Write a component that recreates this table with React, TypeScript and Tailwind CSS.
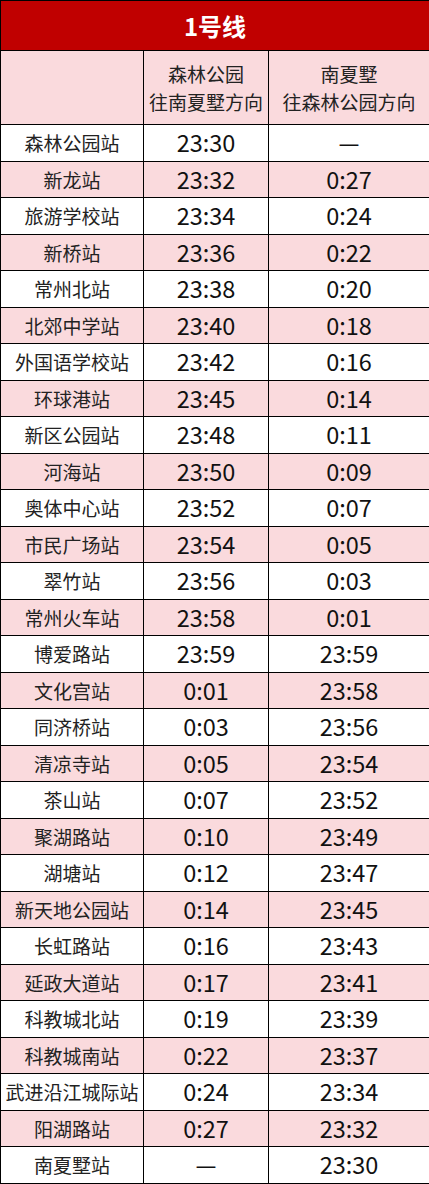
import React from 'react'

const rows: [string, string, string][] = [
  ['森林公园站', '23:30', '—'],
  ['新龙站', '23:32', '0:27'],
  ['旅游学校站', '23:34', '0:24'],
  ['新桥站', '23:36', '0:22'],
  ['常州北站', '23:38', '0:20'],
  ['北郊中学站', '23:40', '0:18'],
  ['外国语学校站', '23:42', '0:16'],
  ['环球港站', '23:45', '0:14'],
  ['新区公园站', '23:48', '0:11'],
  ['河海站', '23:50', '0:09'],
  ['奥体中心站', '23:52', '0:07'],
  ['市民广场站', '23:54', '0:05'],
  ['翠竹站', '23:56', '0:03'],
  ['常州火车站', '23:58', '0:01'],
  ['博爱路站', '23:59', '23:59'],
  ['文化宫站', '0:01', '23:58'],
  ['同济桥站', '0:03', '23:56'],
  ['清凉寺站', '0:05', '23:54'],
  ['茶山站', '0:07', '23:52'],
  ['聚湖路站', '0:10', '23:49'],
  ['湖塘站', '0:12', '23:47'],
  ['新天地公园站', '0:14', '23:45'],
  ['长虹路站', '0:16', '23:43'],
  ['延政大道站', '0:17', '23:41'],
  ['科教城北站', '0:19', '23:39'],
  ['科教城南站', '0:22', '23:37'],
  ['武进沿江城际站', '0:24', '23:34'],
  ['阳湖路站', '0:27', '23:32'],
  ['南夏墅站', '—', '23:30'],
]

export default function App() {
  return (
    <div className="w-[429px] bg-white font-['Noto_Sans_CJK_SC','Noto_Sans',sans-serif] text-[#222]">
      <table className="w-[429px] table-fixed border-collapse border border-black">
        <colgroup>
          <col className="w-[143px]" />
          <col className="w-[125px]" />
          <col className="w-[161px]" />
        </colgroup>
        <tbody>
          <tr className="h-[50px] bg-[#c00000]">
            <td colSpan={3} className="border border-black text-center text-[24px] font-bold text-white">
              1号线
            </td>
          </tr>
          <tr className="h-[74px] bg-[#fadadd]">
            <td className="border border-black"></td>
            <td className="border border-black text-center text-[19px] leading-[28px]">
              森林公园
              <br />
              往南夏墅方向
            </td>
            <td className="border border-black text-center text-[19px] leading-[28px]">
              南夏墅
              <br />
              往森林公园方向
            </td>
          </tr>
          {rows.map((r, i) => (
            <tr key={r[0]} className={'h-[36.5px] ' + (i % 2 === 1 ? 'bg-[#fadadd]' : 'bg-white')}>
              <td className="border border-black p-0 text-center text-[19px] leading-none">{r[0]}</td>
              <td className="border border-black p-0 text-center text-[23.5px] leading-none text-[#111]">{r[1]}</td>
              <td className="border border-black p-0 text-center text-[23.5px] leading-none text-[#111]">{r[2]}</td>
            </tr>
          ))}
        </tbody>
      </table>
    </div>
  )
}
